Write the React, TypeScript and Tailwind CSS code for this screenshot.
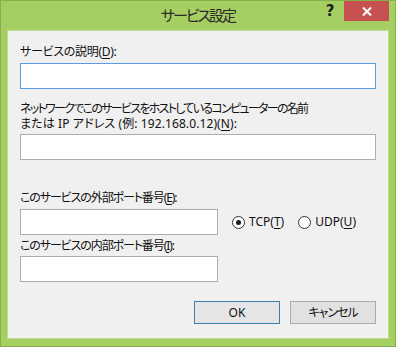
import React from 'react';

const font = "font-['Noto_Sans','Noto_Sans_CJK_JP',sans-serif] [font-feature-settings:'palt']";

function Key({ k }: { k: string }) {
  return <span className="underline underline-offset-2">{k}</span>;
}

function Field({ wide = true, focused = false }: { wide?: boolean; focused?: boolean }) {
  return (
    <div
      className={`h-[26px] bg-white border ${focused ? 'border-[#569de5]' : 'border-[#abadb3]'} ${wide ? 'w-[356px]' : 'w-[198px]'}`}
    />
  );
}

function Radio({ checked, label, k }: { checked?: boolean; label: string; k: string }) {
  return (
    <div className="flex items-center gap-[4px]">
      <div className="w-[13px] h-[13px] rounded-full border border-[#333] bg-white flex items-center justify-center">
        {checked && <div className="w-[5px] h-[5px] rounded-full bg-[#1b1b1b]" />}
      </div>
      <span className="text-[12px] leading-[16px] text-[#111]">
        {label}(<Key k={k} />)
      </span>
    </div>
  );
}

export default function App() {
  return (
    <div className={`w-[396px] h-[347px] bg-[#a6cf63] border border-[#88b04a] px-[6px] pb-[7px] flex flex-col ${font}`}>
      {/* Title bar */}
      <div className="h-[29px] grid grid-cols-[1fr_auto_1fr] items-start">
        <div />
        <div className="pt-[4px] text-[15px] leading-[20px] tracking-[-2px] text-[#2b2b2b]">サービス設定</div>
        <div className="flex justify-end">
          <div className="w-[30px] h-[20px] pl-[2px] flex items-center justify-center text-[15px] font-bold text-[#222] font-['DejaVu_Sans',sans-serif]">?</div>
          <div className="w-[45px] h-[20px] bg-[#c75050] flex items-center justify-center">
            <svg width="10" height="9" viewBox="0 0 10 9">
              <path d="M1 0.5 L9 8.5 M9 0.5 L1 8.5" stroke="#fff" strokeWidth="2" />
            </svg>
          </div>
        </div>
      </div>

      {/* Body */}
      <div className="flex-1 bg-[#f0f0f0] border border-[#bfdb91] px-3 pt-[13px] flex flex-col text-[12px] text-[#111]">
        <div className="h-[16px] leading-[16px] tracking-[-0.3px]">
          サービスの説明(<Key k="D" />):
        </div>
        <div className="mt-[3px]">
          <Field focused />
        </div>

        <div className="mt-[12px] h-[30px] flex flex-col">
          <div className="h-[15px] leading-[15px] tracking-[-1.7px]">
            ネットワークでこのサービスをホストしているコンピューターの名前
          </div>
          <div className="h-[15px] leading-[15px] tracking-[0.1px]">
            または IP アドレス (例: 192.168.0.12)(<Key k="N" />):
          </div>
        </div>
        <div className="mt-[3px]">
          <Field />
        </div>

        <div className="mt-[30px] h-[16px] leading-[16px] tracking-[-1.1px]">
          このサービスの外部ポート番号(<Key k="E" />):
        </div>
        <div className="mt-[3px] flex items-center">
          <Field wide={false} />
          <div className="ml-[14px] flex items-center gap-[14px]">
            <Radio checked label="TCP" k="T" />
            <Radio label="UDP" k="U" />
          </div>
        </div>

        <div className="mt-[3px] h-[16px] leading-[16px] tracking-[-1.1px]">
          このサービスの内部ポート番号(<Key k="I" />):
        </div>
        <div className="mt-[2px]">
          <Field wide={false} />
        </div>

        <div className="mt-[19px] flex justify-end gap-[10px]">
          <button className="w-[86px] h-[23px] border border-[#3c7fb1] bg-[#e5e5e5] text-[12px] text-[#111]">
            OK
          </button>
          <button className="w-[86px] h-[23px] border border-[#acacac] bg-[#e1e1e1] text-[12px] tracking-[-1px] text-[#111]">
            キャンセル
          </button>
        </div>
      </div>
    </div>
  );
}
